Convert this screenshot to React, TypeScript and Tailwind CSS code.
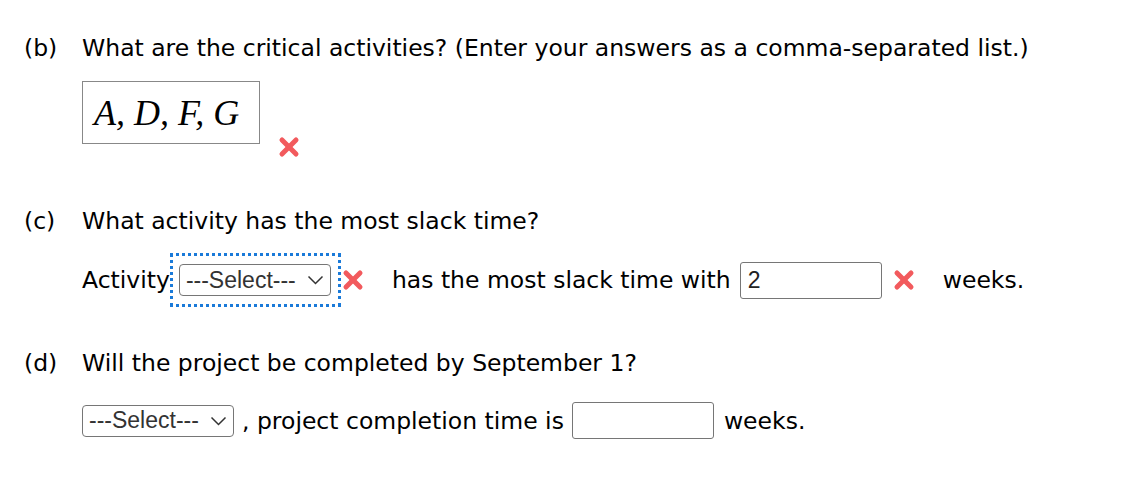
import React from "react";

function WrongMark({ className = "" }: { className?: string }) {
  return (
    <svg
      width="22"
      height="22"
      viewBox="0 0 22 22"
      className={className}
      aria-label="incorrect"
    >
      <g stroke="#f25a5d" strokeWidth="5" strokeLinecap="round">
        <line x1="4" y1="4" x2="18" y2="18" />
        <line x1="18" y1="4" x2="4" y2="18" />
      </g>
    </svg>
  );
}

function FakeSelect() {
  return (
    <div className="flex h-[32px] w-[152px] items-center justify-between rounded-[4px] border border-[#767676] bg-white pl-[6px] pr-[6px] font-['Liberation_Sans',Arial,sans-serif] text-[23px] leading-none text-[#333]">
      <span>---Select---</span>
      <svg width="17" height="10" viewBox="0 0 17 10">
        <path d="M1.5 1.5 L8.5 8.5 L15.5 1.5" fill="none" stroke="#333" strokeWidth="1.5" />
      </svg>
    </div>
  );
}

function TextBox({ value = "" }: { value?: string }) {
  return (
    <div className="flex h-[37px] w-[142px] items-center rounded-[3px] border border-[#767676] bg-white px-[7px] font-['Liberation_Sans',Arial,sans-serif] text-[23px] text-[#222]">
      {value}
    </div>
  );
}

function Part({ label, children }: { label: string; children: React.ReactNode }) {
  return (
    <div className="flex">
      <div className="w-[58px] shrink-0">{label}</div>
      <div className="flex-1">{children}</div>
    </div>
  );
}

export default function App() {
  return (
    <div className="h-[484px] w-[1146px] bg-white pl-[24px] pt-[33px] font-['DejaVu_Sans',Verdana,sans-serif] text-[23.5px] leading-[30px] text-black">
      {/* (b) critical activities */}
      <Part label="(b)">
        <div>What are the critical activities? (Enter your answers as a comma-separated list.)</div>
        <div className="mt-[18px] flex items-start">
          <div className="flex h-[63px] w-[178px] items-center border border-[#888] pl-[11px] font-['Liberation_Serif','Times_New_Roman',serif] text-[36px] italic">
            A, D, F, G
          </div>
          <WrongMark className="ml-[18px] mt-[55px]" />
        </div>
      </Part>

      {/* (c) slack time */}
      <div className="mt-[48px]">
        <Part label="(c)">
          <div>What activity has the most slack time?</div>
          <div className="mt-[17px] flex items-center">
            <span>Activity</span>
            <div className="border-[3px] border-dotted border-[#1a7ad9] pl-[6px] pr-[7px] py-[8px]">
              <FakeSelect />
            </div>
            <WrongMark className="ml-[1px]" />
            <span className="ml-[28px]">has the most slack time with</span>
            <div className="ml-[9px]">
              <TextBox value="2" />
            </div>
            <WrongMark className="ml-[11px]" />
            <span className="ml-[28px]">weeks.</span>
          </div>
        </Part>
      </div>

      {/* (d) completion */}
      <div className="mt-[41px]">
        <Part label="(d)">
          <div>Will the project be completed by September 1?</div>
          <div className="mt-[24px] flex items-center">
            <FakeSelect />
            <span className="ml-[8px]">, project completion time is</span>
            <div className="ml-[8px]">
              <TextBox />
            </div>
            <span className="ml-[10px]">weeks.</span>
          </div>
        </Part>
      </div>
    </div>
  );
}
